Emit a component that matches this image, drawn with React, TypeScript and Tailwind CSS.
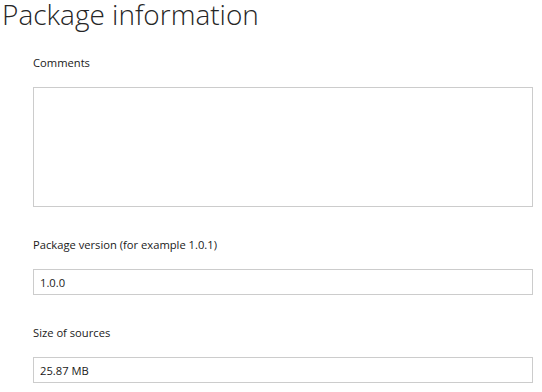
import React from 'react';

// Package information form — a simple Windows-style property page.

const labelCls = 'block text-[11.2px] leading-[16px] text-[#1a1a1a] ml-[33px]';
const boxCls =
	'block w-[500px] ml-[33px] border border-[#cccccc] bg-white text-[11.2px] text-[#1a1a1a] outline-none';

export default function App() {
	return (
		<div
			className="w-[542px] h-[392px] bg-white overflow-hidden"
			style={{ fontFamily: '"Open Sans", "Noto Sans", sans-serif' }}
		>
			<h1 className="-mt-[3px] ml-[2px] text-[28px] leading-[34px] font-light text-[#262626]">
				Package information
			</h1>

			<label className={`${labelCls} mt-[24px]`}>Comments</label>
			<textarea className={`${boxCls} mt-[16px] h-[120px] resize-none`} defaultValue="" />

			<label className={`${labelCls} mt-[30px]`}>Package version (for example 1.0.1)</label>
			<input className={`${boxCls} mt-[16px] h-[26px] px-[6px]`} defaultValue="1.0.0" />

			<label className={`${labelCls} mt-[30px]`}>Size of sources</label>
			<input className={`${boxCls} mt-[16px] h-[26px] px-[6px]`} defaultValue="25.87 MB" />
		</div>
	);
}
